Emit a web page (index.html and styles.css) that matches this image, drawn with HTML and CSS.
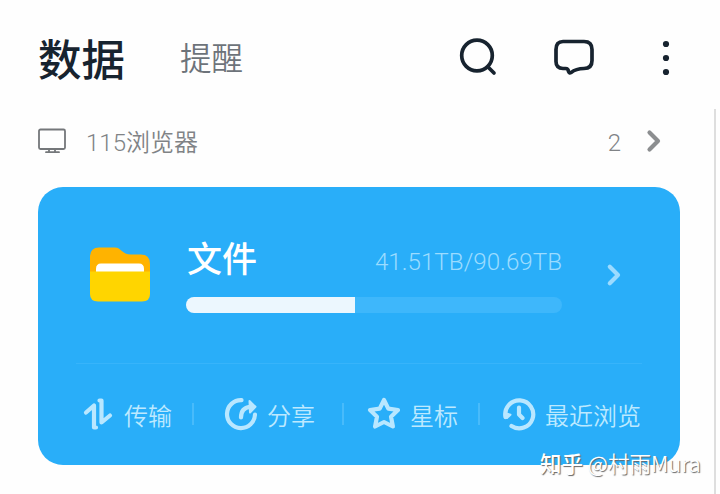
FILE: index.html
```
<!DOCTYPE html>
<html lang="zh-CN">
<head>
<meta charset="utf-8">
<title>数据</title>
<link rel="stylesheet" href="styles.css">
</head>
<body>
<div class="screen">
  <header class="header">
    <h1 class="title">数据</h1>
    <span class="subtitle">提醒</span>
    <svg class="icon-search" width="40" height="40" viewBox="0 0 40 40"><circle cx="18" cy="17.5" r="15.3"/><path d="M29 29l6 6"/></svg>
    <svg class="icon-chat" width="42" height="40" viewBox="0 0 42 40"><path d="M10 3.500H31Q39 3.500 39 11.500V22.500Q39 30.500 31 30.500C25 30.500 22 31.300 18 34.600Q16.300 35.800 15.500 33.500Q15.300 30.500 12.500 30.500H10Q3 30.500 3 23.500V11.500Q3 3.500 10 3.500Z"/></svg>
    <svg class="icon-more" width="8" height="36" viewBox="0 0 8 36"><circle cx="4" cy="4" r="3.1"/><circle cx="4" cy="18" r="3.1"/><circle cx="4" cy="32" r="3.1"/></svg>
  </header>

  <div class="device">
    <svg class="icon-monitor" width="30" height="26" viewBox="0 0 30 26"><rect x="2" y="1.500" width="26" height="19.500" rx="1.5"/><path d="M12 21.500v2M18 21.500v2M9 24.200h13"/></svg>
    <span class="device-name">115浏览器</span>
    <span class="device-count">2</span>
    <svg class="arrow" width="16" height="24" viewBox="0 0 16 24"><path d="M3.5 3.5L12 12l-8.500 8.500"/></svg>
  </div>

  <section class="card">
    <div class="storage">
      <svg class="folder" width="60" height="56" viewBox="0 0 60 56">
        <path fill="#ffb300" d="M9 .500H25C31 .500 32 7.500 41 7.500H51Q60 7.500 60 17V30H0V10Q0 .500 9 .500Z"/>
        <path fill="#fff" d="M6 25V22Q6 16.500 11 16.500H49Q54 16.500 54 22V25Z"/>
        <path fill="#ffd500" d="M0 24.500H60V47Q60 54.500 52 54.500H8Q0 54.500 0 47Z"/>
      </svg>
      <div class="usage">
        <div class="usage-head">
          <span class="usage-title">文件</span>
          <span class="usage-size">41.51TB/90.69TB</span>
        </div>
        <div class="bar"><div class="bar-fill" style="width:45%"></div></div>
      </div>
      <svg class="arrow arrow-light" width="16" height="24" viewBox="0 0 16 24"><path d="M3.800 3.800L12 12l-8.200 8.200"/></svg>
    </div>
    <nav class="actions">
      <div class="action">
        <svg width="32" height="34" viewBox="0 0 32 34"><path d="M4 15.500L12 8.500V30.500L14 30.500M17.500 3.500L19.500 3.500V25.500L28 18.500"/></svg>
        <span>传输</span>
      </div>
      <i class="sep"></i>
      <div class="action share">
        <svg width="34" height="34" viewBox="0 0 34 34"><path d="M17.500 3.100A14 14 0 1 0 31 17.500M17 20.500C17 14 20 10.500 26 9.800"/><path class="solid" d="M25.500 4L31.500 9.800L26 15.500Z"/></svg>
        <span>分享</span>
      </div>
      <i class="sep"></i>
      <div class="action star">
        <svg width="34" height="34" viewBox="0 0 34 34"><path d="M17 3L21.300 11.600L31 13L24 19.700L25.900 29.500L17 25L8.100 29.500L10 19.700L3 13L12.700 11.600Z"/></svg>
        <span>星标</span>
      </div>
      <i class="sep"></i>
      <div class="action recent">
        <svg width="34" height="34" viewBox="0 0 34 34"><path d="M3.500 20A14 14 0 1 1 9.500 29M17 10.500V17.500L20.500 21"/><path class="solid" d="M2.800 20V16L8.500 17.800L5 21Z"/></svg>
        <span>最近浏览</span>
      </div>
    </nav>
  </section>
  <div class="watermark"><b>知乎</b> @村雨Mura</div>
  <div class="scrollbar"></div>
</div>
</body>
</html>
```

FILE: styles.css
```
* { box-sizing: border-box; }
body {
  margin: 0;
  background: #fefefe;
  font-family: Roboto, "Noto Sans CJK SC", sans-serif;
}
svg { display: block; flex: none; fill: none; stroke-linecap: round; stroke-linejoin: round; }
.screen {
  position: relative;
  width: 720px;
  height: 494px;
  overflow: hidden;
  white-space: nowrap;
}
.header {
  display: flex;
  align-items: center;
  height: 116px;
  padding: 0 50px 0 38px;
  color: #17232f;
}
.title {
  width: 142px;
  margin: 0;
  padding-top: 8px;
  font-size: 43.5px;
  line-height: 60px;
  font-weight: 500;
}
.subtitle {
  width: 279px;
  padding-top: 4px;
  font-size: 31.5px;
  line-height: 44px;
  font-weight: 350;
  color: #6d737a;
}
.icon-search, .icon-chat { stroke: #17232f; stroke-width: 3.7; }
.icon-chat { margin-left: 54px; }
.icon-more { margin-left: 67px; fill: #17232f; }
.device {
  display: flex;
  align-items: center;
  height: 50px;
  padding: 0 58px 0 37px;
  color: #808386;
}
.icon-monitor { stroke: #74777a; stroke-width: 1.8; }
.device-name {
  margin-left: 19px;
  padding-top: 4px;
  font-size: 24px;
  line-height: 36px;
  font-weight: 350;
}
.device-count {
  margin-left: auto;
  margin-right: 25px;
  padding-top: 4px;
  font-size: 24px;
  font-weight: 350;
}
.arrow { stroke: #8c8e90; stroke-width: 4.2; }
.card {
  width: 642px;
  height: 277.5px;
  margin: 21px 0 0 38px;
  border-radius: 25px;
  background: #29aef9;
}
.storage {
  display: flex;
  align-items: center;
  height: 176px;
  margin: 0 38px;
  padding: 0 18px 0 14px;
}
.usage { width: 376px; margin: 2px 0 0 36px; }
.usage-head {
  display: flex;
  align-items: flex-start;
  justify-content: space-between;
  height: 58px;
}
.usage-title { padding-left: 1px; color: #fff; font-size: 35px; line-height: 44px; font-weight: 500; }
.usage-size { padding-top: 1px; color: #9bdcff; font-size: 24.2px; line-height: 44px; font-weight: 350; }
.bar { height: 16px; border-radius: 8px; background: #3eb7fb; overflow: hidden; }
.bar-fill { height: 100%; background: #ecf7fe; }
.arrow-light { margin-left: 44px; stroke: #9cdbff; }
.actions {
  display: flex;
  align-items: center;
  height: 101px;
  margin: 0 38px;
  padding-left: 6px;
  border-top: 1.5px solid #37b4fb;
}
.action { display: flex; align-items: center; color: #bde9ff; font-size: 24px; line-height: 36px; font-weight: 350; }
.action svg { stroke: #b9e7ff; stroke-width: 4.2; }
.action .solid { fill: #b9e7ff; stroke-width: 2; }
.action span { margin-left: 10px; padding-top: 5px; }
.share { margin-left: 30px; }
.star { margin-left: 23px; }
.recent { margin-left: 22px; }
.share span, .star span, .recent span { margin-left: 9px; }
.sep { width: 2px; height: 22px; margin-left: 20px; background: #48bbfb; }
.share + .sep { margin-left: 27px; }
.watermark {
  position: absolute;
  left: 540px;
  top: 447px;
  font-size: 21.5px;
  line-height: 32px;
  font-family: "Noto Sans CJK SC", sans-serif;
  font-weight: 350;
  color: #fff;
  text-shadow: 1px 1px 1px #666;
}
.watermark b { font-weight: 500; }
.scrollbar {
  position: absolute;
  left: 714px;
  top: 109px;
  width: 2px;
  height: 385px;
  background: #dedede;
}
```
